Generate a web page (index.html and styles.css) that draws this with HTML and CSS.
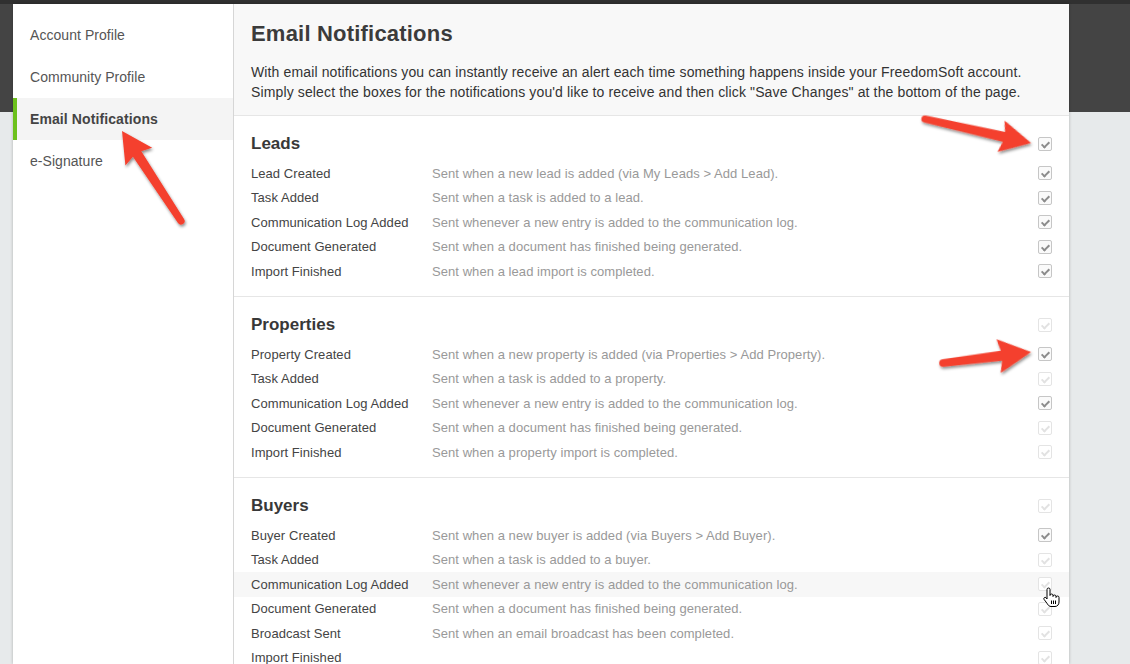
FILE: index.html
```html
<!DOCTYPE html>
<html>
<head>
<meta charset="utf-8">
<title>Email Notifications</title>
<link rel="stylesheet" href="styles.css">
</head>
<body>
<div class="panel">
  <nav class="sidebar">
    <a class="nav-item">Account Profile</a>
    <a class="nav-item">Community Profile</a>
    <a class="nav-item active">Email Notifications</a>
    <a class="nav-item">e-Signature</a>
  </nav>
  <main class="main">
    <header class="main-header">
      <h1 class="title">Email Notifications</h1>
      <p class="intro">With email notifications you can instantly receive an alert each time something happens inside your FreedomSoft account.<br>Simply select the boxes for the notifications you'd like to receive and then click "Save Changes" at the bottom of the page.</p>
    </header>

    <section class="group">
      <div class="group-head"><h2>Leads</h2><span class="cb on"></span></div>
      <div class="row"><span class="name">Lead Created</span><span class="desc">Sent when a new lead is added (via My Leads &gt; Add Lead).</span><span class="cb on"></span></div>
      <div class="row"><span class="name">Task Added</span><span class="desc">Sent when a task is added to a lead.</span><span class="cb on"></span></div>
      <div class="row"><span class="name">Communication Log Added</span><span class="desc">Sent whenever a new entry is added to the communication log.</span><span class="cb on"></span></div>
      <div class="row"><span class="name">Document Generated</span><span class="desc">Sent when a document has finished being generated.</span><span class="cb on"></span></div>
      <div class="row"><span class="name">Import Finished</span><span class="desc">Sent when a lead import is completed.</span><span class="cb on"></span></div>
    </section>

    <section class="group">
      <div class="group-head"><h2>Properties</h2><span class="cb"></span></div>
      <div class="row"><span class="name">Property Created</span><span class="desc">Sent when a new property is added (via Properties &gt; Add Property).</span><span class="cb on"></span></div>
      <div class="row"><span class="name">Task Added</span><span class="desc">Sent when a task is added to a property.</span><span class="cb"></span></div>
      <div class="row"><span class="name">Communication Log Added</span><span class="desc">Sent whenever a new entry is added to the communication log.</span><span class="cb on"></span></div>
      <div class="row"><span class="name">Document Generated</span><span class="desc">Sent when a document has finished being generated.</span><span class="cb"></span></div>
      <div class="row"><span class="name">Import Finished</span><span class="desc">Sent when a property import is completed.</span><span class="cb"></span></div>
    </section>

    <section class="group">
      <div class="group-head"><h2>Buyers</h2><span class="cb"></span></div>
      <div class="row"><span class="name">Buyer Created</span><span class="desc">Sent when a new buyer is added (via Buyers &gt; Add Buyer).</span><span class="cb on"></span></div>
      <div class="row"><span class="name">Task Added</span><span class="desc">Sent when a task is added to a buyer.</span><span class="cb"></span></div>
      <div class="row hover"><span class="name">Communication Log Added</span><span class="desc">Sent whenever a new entry is added to the communication log.</span><span class="cb"></span></div>
      <div class="row"><span class="name">Document Generated</span><span class="desc">Sent when a document has finished being generated.</span><span class="cb"></span></div>
      <div class="row"><span class="name">Broadcast Sent</span><span class="desc">Sent when an email broadcast has been completed.</span><span class="cb"></span></div>
      <div class="row"><span class="name">Import Finished</span><span class="desc"></span><span class="cb"></span></div>
    </section>
  </main>
</div>

<svg class="annotations" width="1130" height="664" viewBox="0 0 1130 664" aria-hidden="true">
  <defs>
    <filter id="sh" x="-20%" y="-20%" width="140%" height="140%">
      <feDropShadow dx="1" dy="2" stdDeviation="1.4" flood-color="#000" flood-opacity="0.45"/>
    </filter>
  </defs>
  <g filter="url(#sh)" fill="#f4412f">
    <g transform="translate(181,221) rotate(-123.25)">
      <path d="M0,-3.6 L80,-5 L77,-16 L107.6,0 L77,16 L80,5 L0,3.6 A3.6,3.6 0 0 1 0,-3.6 Z"/>
    </g>
    <g transform="translate(925,119) rotate(12.76)">
      <path d="M0,-3.6 L81,-5 L78,-16 L108.7,0 L78,16 L81,5 L0,3.6 A3.6,3.6 0 0 1 0,-3.6 Z"/>
    </g>
    <g transform="translate(943,363) rotate(-7.1)">
      <path d="M0,-3.8 L59,-5 L56,-17 L88.7,0 L56,17 L59,5 L0,3.8 A3.8,3.8 0 0 1 0,-3.8 Z"/>
    </g>
  </g>
  <g transform="translate(1042,587)">
    <path d="M5 2.5 a1.5 1.5 0 0 1 3 0 V8.5 a1.5 1.5 0 0 1 3 0 V9.5 a1.5 1.5 0 0 1 3 0 V10.5 a1.5 1.5 0 0 1 3 0 V15 c0 2.5 -1.5 4.5 -4 4.5 H9 c-1.6 0 -2.6 -1 -3.6 -2.6 L2 12.3 a1.3 1.3 0 0 1 2 -1.6 L5 12 Z" fill="#fff" stroke="#000" stroke-width="1" stroke-linejoin="round"/>
    <path d="M9.5 13.5 V17 M11.5 13.5 V17 M13.5 13.5 V17" stroke="#000" stroke-width="1"/>
  </g>
</svg>
</body>
</html>
```

FILE: styles.css
```css
* { box-sizing: border-box; margin: 0; padding: 0; }

html, body {
  width: 1130px;
  height: 664px;
  overflow: hidden;
}

body {
  position: relative;
  font-family: "Liberation Sans", Arial, Helvetica, sans-serif;
  background: linear-gradient(to bottom, #303030 0, #303030 4px, #444444 4px, #444444 112px, #e7eaeb 112px);
}

.panel {
  display: flex;
  width: 1056px;
  height: 660px;
  margin: 4px 0 0 13px;
  background: #fff;
  box-shadow: 0 0 3px rgba(0, 0, 0, 0.25);
}

/* Sidebar */
.sidebar {
  width: 221px;
  flex: none;
  border-right: 1px solid #d6d6d6;
  padding-top: 10px;
  display: flex;
  flex-direction: column;
}

.nav-item {
  display: block;
  height: 42px;
  line-height: 42px;
  padding-left: 17px;
  font-size: 14px;
  color: #555;
  text-decoration: none;
  letter-spacing: 0.05px;
}

.nav-item.active {
  background: #f4f4f4;
  border-left: 4px solid #6cc01c;
  padding-left: 13px;
  font-weight: bold;
  color: #444;
  letter-spacing: 0.1px;
}

/* Main */
.main {
  flex: 1;
  display: flex;
  flex-direction: column;
}

.main-header {
  background: #f8f8f8;
  border-bottom: 1px solid #e6e6e6;
  padding: 17px 17px 13px;
}

.title {
  font-size: 22px;
  line-height: 26px;
  font-weight: bold;
  color: #3b3b3b;
  margin-bottom: 15px;
  letter-spacing: 0.2px;
}

.intro {
  font-size: 14px;
  line-height: 20px;
  color: #333;
  letter-spacing: 0.13px;
}

.group {
  padding: 18px 0 12.5px;
  border-bottom: 1px solid #e6e6e6;
}

.group-head {
  display: flex;
  align-items: center;
  padding: 0 17px;
  height: 20px;
  margin-bottom: 7px;
}

.group-head h2 {
  font-size: 17px;
  line-height: 20px;
  font-weight: bold;
  color: #383838;
}

.row {
  display: flex;
  align-items: center;
  height: 24.5px;
  padding: 0 17px;
  font-size: 13px;
  letter-spacing: 0.06px;
}

.row.hover {
  background: #f7f7f7;
}

.name {
  width: 181px;
  flex: none;
  color: #444;
}

.desc {
  color: #999;
}

/* Checkboxes */
.cb {
  margin-left: auto;
  flex: none;
  width: 14px;
  height: 14px;
  border: 1px solid #e4e4e4;
  border-radius: 2px;
  background: #fff;
  position: relative;
}

.cb::after {
  content: "";
  position: absolute;
  left: 4px;
  top: 2px;
  width: 3px;
  height: 6px;
  border-right: 2px solid #e2e2e2;
  border-bottom: 2px solid #e2e2e2;
  transform: rotate(45deg);
}

.cb.on {
  border-color: #c6c6c6;
  background: #fafafa;
}

.cb.on::after {
  border-color: #8c8c8c;
}

/* Annotation overlay (arrows, cursor drawn over the screenshot) */
.annotations {
  position: absolute;
  left: 0;
  top: 0;
  pointer-events: none;
}
```
